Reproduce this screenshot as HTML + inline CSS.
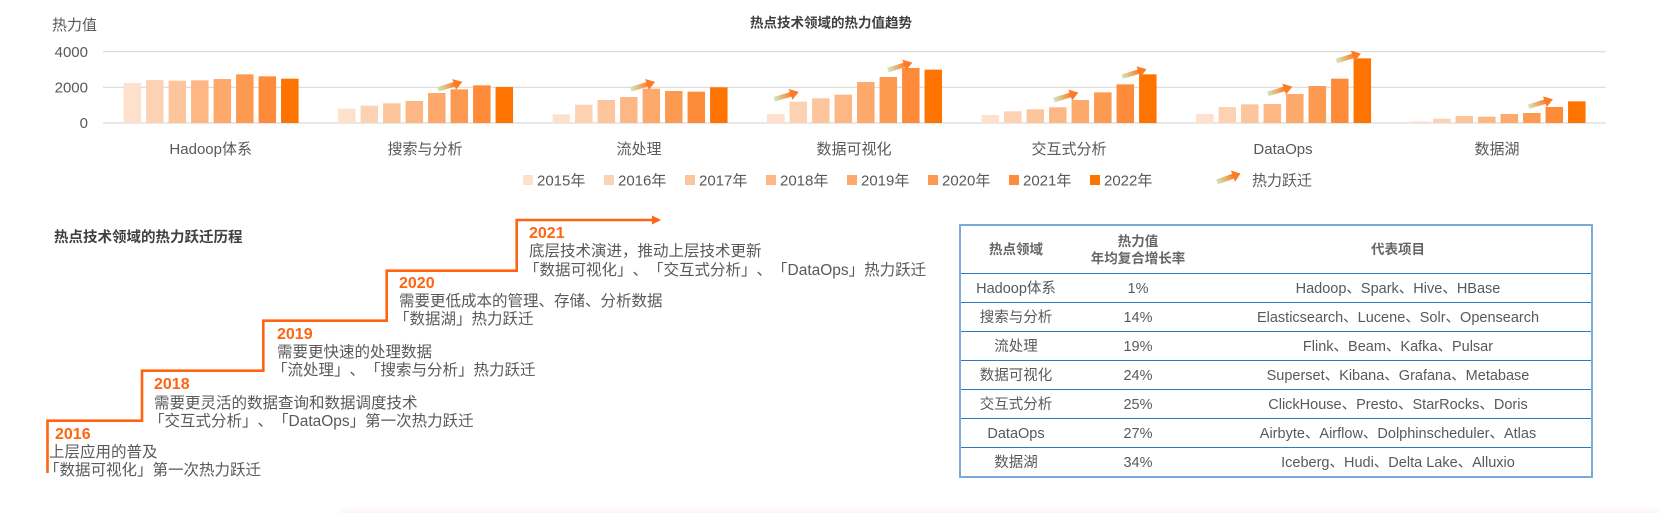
<!DOCTYPE html>
<html><head><meta charset="utf-8"><style>
html,body{margin:0;padding:0;background:#fff;width:1659px;height:513px;overflow:hidden;position:relative;font-family:"Liberation Sans","Noto Sans CJK SC",sans-serif;color:#595959;text-spacing-trim:space-all}
.a{position:absolute;white-space:nowrap}
.yr{color:#ff6410;font-weight:bold;font-size:16px;line-height:18px}
.tx{font-size:15.5px;line-height:18px;color:#595959}
table{position:absolute;left:959px;top:224px;width:634px;border-collapse:collapse;border:2px solid #7aa9db;font-size:14.5px;color:#595959}
td,th{text-align:center;padding:0;border-bottom:1.5px solid #2f78c4;vertical-align:middle}
th{height:47px;font-size:13.5px;font-weight:bold;line-height:17px;color:#666}
td{height:26px;line-height:26px;padding-top:2px;box-sizing:content-box}
</style></head><body>
<svg class="a" style="left:0;top:0" width="1659" height="200" viewBox="0 0 1659 200">
<defs><linearGradient id="g" x1="0" x2="1"><stop offset="0" stop-color="#cfe8bd"/><stop offset="1" stop-color="#ff7a25"/></linearGradient></defs>
<g stroke="#d9d9d9" stroke-width="1.2"><line x1="103" y1="51.7" x2="1606" y2="51.7"/><line x1="103" y1="87.3" x2="1606" y2="87.3"/><line x1="103" y1="123" x2="1606" y2="123"/></g>
<g transform="scale(0.35714,0.33333)">
<g id="bars"></g>
</g>
<g font-size="15" fill="#595959" font-family="Liberation Sans, Noto Sans CJK SC, sans-serif">
<text x="52" y="30">热力值</text>
<text x="88" y="57" text-anchor="end">4000</text><text x="88" y="92.5" text-anchor="end">2000</text><text x="88" y="128" text-anchor="end">0</text>
<g text-anchor="middle"><text x="210.7" y="154">Hadoop体系</text><text x="425" y="154">搜索与分析</text><text x="639" y="154">流处理</text><text x="854" y="154">数据可视化</text><text x="1069" y="154">交互式分析</text><text x="1283" y="154">DataOps</text><text x="1497" y="154">数据湖</text></g>
<text x="831" y="27.5" text-anchor="middle" font-weight="bold" font-size="13.5" fill="#404040">热点技术领域的热力值趋势</text>
<rect x="523" y="175" width="10" height="10" fill="#fee1cc"/><text x="537" y="185.5">2015年</text>
<rect x="604" y="175" width="10" height="10" fill="#fdd2b3"/><text x="618" y="185.5">2016年</text>
<rect x="685" y="175" width="10" height="10" fill="#fdc59c"/><text x="699" y="185.5">2017年</text>
<rect x="766" y="175" width="10" height="10" fill="#fdb785"/><text x="780" y="185.5">2018年</text>
<rect x="847" y="175" width="10" height="10" fill="#fda96c"/><text x="861" y="185.5">2019年</text>
<rect x="928" y="175" width="10" height="10" fill="#fd9a52"/><text x="942" y="185.5">2020年</text>
<rect x="1009" y="175" width="10" height="10" fill="#fe8b3a"/><text x="1023" y="185.5">2021年</text>
<rect x="1090" y="175" width="10" height="10" fill="#ff7300"/><text x="1104" y="185.5">2022年</text>
<g transform="translate(1217,182) rotate(-20)"><rect x="0" y="-2.5" width="18" height="5" fill="url(#g)"/><polygon points="17,-6 25,0 17,6" fill="#ff7a25"/></g>
<text x="1252" y="185.5">热力跃迁</text>
</g>
</svg>
<script>
(function(){
var t=[[249,240,242,241,237,223,229,236],[326,317,310,303,279,268,256,261],[343,314,300,291,266,273,275,262],[342,305,295,284,246,231,204,209],[345,334,328,322,300,277,253,223],[342,321,313,312,282,258,236,175],[364,356,348,350,342,339,321,304]];
var c=["#fee1cc","#fdd2b3","#fdc59c","#fdb785","#fda96c","#fd9a52","#fe8b3a","#ff7300"];
var s="";
for(var k=0;k<7;k++)for(var i=0;i<8;i++){var x=346+600.6*k+63*i;s+='<rect x="'+x+'" y="'+t[k][i]+'" width="49" height="'+(369-t[k][i])+'" fill="'+c[i]+'"/>';}
var ar=[[1226,268],[1766,268],[2168,298],[2486,210],[2951,300],[3142,230],[3550,282],[3742,183],[4280,320]];
for(var j=0;j<ar.length;j++){s+='<g transform="translate('+ar[j][0]+','+ar[j][1]+') rotate(-18)"><rect x="0" y="-7" width="52" height="14" fill="url(#g)"/><polygon points="48,-17 72,0 48,17" fill="#ff7a25"/></g>';}
document.getElementById("bars").innerHTML=s;
})();
</script>
<div class="a" style="left:54px;top:226px;font-size:14.5px;font-weight:bold;color:#404040">热点技术领域的热力跃迁历程</div>
<svg class="a" style="left:0;top:200px" width="680" height="280">
<polyline points="47.5,273 47.5,220.7 142,220.7 142,170.7 263.3,170.7 263.3,120.7 386.7,120.7 386.7,70.7 516.7,70.7 516.7,20 655,20" fill="none" stroke="#ff6410" stroke-width="2.6"/>
<polygon points="652,15.5 661,20 652,24.5" fill="#ff6410"/>
</svg>
<div class="a yr" style="left:55px;top:426px">2016</div>
<div class="a tx" style="left:49px;top:444px">上层应用的普及</div>
<div class="a tx" style="left:44px;top:462px">「数据可视化」第一次热力跃迁</div>
<div class="a yr" style="left:154px;top:376px">2018</div>
<div class="a tx" style="left:154px;top:395px">需要更灵活的数据查询和数据调度技术</div>
<div class="a tx" style="left:149px;top:413px">「交互式分析」、「DataOps」第一次热力跃迁</div>
<div class="a yr" style="left:277px;top:326px">2019</div>
<div class="a tx" style="left:277px;top:344px">需要更快速的处理数据</div>
<div class="a tx" style="left:272px;top:362px">「流处理」、「搜索与分析」热力跃迁</div>
<div class="a yr" style="left:399px;top:275px">2020</div>
<div class="a tx" style="left:399px;top:293px">需要更低成本的管理、存储、分析数据</div>
<div class="a tx" style="left:394px;top:311px">「数据湖」热力跃迁</div>
<div class="a yr" style="left:529px;top:225px">2021</div>
<div class="a tx" style="left:529px;top:243px">底层技术演进，推动上层技术更新</div>
<div class="a tx" style="left:524px;top:262px">「数据可视化」、「交互式分析」、「DataOps」热力跃迁</div>
<table>
<tr><th style="width:110px">热点领域</th><th style="width:134px">热力值<br>年均复合增长率</th><th>代表项目</th></tr>
<tr><td>Hadoop体系</td><td>1%</td><td>Hadoop、Spark、Hive、HBase</td></tr>
<tr><td>搜索与分析</td><td>14%</td><td>Elasticsearch、Lucene、Solr、Opensearch</td></tr>
<tr><td>流处理</td><td>19%</td><td>Flink、Beam、Kafka、Pulsar</td></tr>
<tr><td>数据可视化</td><td>24%</td><td>Superset、Kibana、Grafana、Metabase</td></tr>
<tr><td>交互式分析</td><td>25%</td><td>ClickHouse、Presto、StarRocks、Doris</td></tr>
<tr><td>DataOps</td><td>27%</td><td>Airbyte、Airflow、Dolphinscheduler、Atlas</td></tr>
<tr><td>数据湖</td><td>34%</td><td>Iceberg、Hudi、Delta Lake、Alluxio</td></tr>
</table>
<div class="a" style="left:340px;top:506px;width:1319px;height:7px;background:linear-gradient(#fff,#fff5f0)"></div>
</body></html>
